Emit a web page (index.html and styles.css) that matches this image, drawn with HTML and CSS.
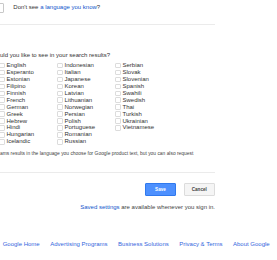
FILE: index.html
```html
<!DOCTYPE html>
<html>
<head>
<meta charset="utf-8">
<link rel="stylesheet" href="styles.css">
</head>
<body>
<div class="page">
  <div class="content">
    <div class="top">
      <span class="select"></span>
      <span class="hint">Don't see <a href="#">a language you know</a>?</span>
    </div>
    <div class="rule"></div>
    <div class="question">uld you like to see in your search results?</div>
    <div class="langs">
      <div class="col">
        <label><span class="cb"></span>English</label>
        <label><span class="cb"></span>Esperanto</label>
        <label><span class="cb"></span>Estonian</label>
        <label><span class="cb"></span>Filipino</label>
        <label><span class="cb"></span>Finnish</label>
        <label><span class="cb"></span>French</label>
        <label><span class="cb"></span>German</label>
        <label><span class="cb"></span>Greek</label>
        <label><span class="cb"></span>Hebrew</label>
        <label><span class="cb"></span>Hindi</label>
        <label><span class="cb"></span>Hungarian</label>
        <label><span class="cb"></span>Icelandic</label>
      </div>
      <div class="col">
        <label><span class="cb"></span>Indonesian</label>
        <label><span class="cb"></span>Italian</label>
        <label><span class="cb"></span>Japanese</label>
        <label><span class="cb"></span>Korean</label>
        <label><span class="cb"></span>Latvian</label>
        <label><span class="cb"></span>Lithuanian</label>
        <label><span class="cb"></span>Norwegian</label>
        <label><span class="cb"></span>Persian</label>
        <label><span class="cb"></span>Polish</label>
        <label><span class="cb"></span>Portuguese</label>
        <label><span class="cb"></span>Romanian</label>
        <label><span class="cb"></span>Russian</label>
      </div>
      <div class="col">
        <label><span class="cb"></span>Serbian</label>
        <label><span class="cb"></span>Slovak</label>
        <label><span class="cb"></span>Slovenian</label>
        <label><span class="cb"></span>Spanish</label>
        <label><span class="cb"></span>Swahili</label>
        <label><span class="cb"></span>Swedish</label>
        <label><span class="cb"></span>Thai</label>
        <label><span class="cb"></span>Turkish</label>
        <label><span class="cb"></span>Ukrainian</label>
        <label><span class="cb"></span>Vietnamese</label>
      </div>
    </div>
    <div class="notice">ams results in the language you choose for Google product text, but you can also request</div>
    <div class="rule rule2"></div>
    <div class="actions">
      <button class="btn save">Save</button>
      <button class="btn cancel">Cancel</button>
    </div>
    <div class="saved"><a href="#">Saved settings</a> are available whenever you sign in.</div>
  </div>
  <div class="footer">
    <a href="#">Google Home</a>
    <a href="#">Advertising Programs</a>
    <a href="#">Business Solutions</a>
    <a href="#">Privacy &amp; Terms</a>
    <a href="#">About Google</a>
  </div>
</div>
</body>
</html>
```

FILE: styles.css
```css
html, body {
  margin: 0;
  padding: 0;
  background: #fff;
}
body {
  width: 277px;
  height: 260px;
  overflow: hidden;
  font-family: "Liberation Sans", Arial, sans-serif;
  font-size: 6px;
  color: #222;
}
a {
  color: #1155cc;
  text-decoration: none;
}
.page {
  width: 277px;
}
.content {
  width: 215px;
}
.top {
  display: flex;
  align-items: center;
  height: 9px;
  padding-top: 3px;
}
.select {
  width: 9px;
  height: 8px;
  margin-left: -7px;
  border: 1px solid #c8c8c8;
  border-radius: 1px;
  box-sizing: content-box;
}
.hint {
  margin-left: 9.3px;
  line-height: 7px;
  color: #333;
}
.rule {
  height: 1px;
  background: #ebebeb;
  margin-top: 12px;
}
.question {
  margin-top: 26.5px;
  line-height: 7px;
  color: #333;
}
.langs {
  display: grid;
  grid-template-columns: 58px 58px 58px;
  margin-top: 3.7px;
  margin-left: -0.7px;
}
.col {
  display: flex;
  flex-direction: column;
}
.col label {
  display: flex;
  align-items: center;
  height: 6.93px;
  line-height: 6.93px;
  color: #333;
  white-space: nowrap;
}
.cb {
  width: 3.6px;
  height: 3.6px;
  border: 1px solid #dcdcdc;
  border-radius: 1px;
  margin-right: 1.6px;
  flex: none;
  background: #fff;
}
.notice {
  margin-top: 4.4px;
  line-height: 7px;
  font-size: 4.9px;
  color: #444;
  white-space: nowrap;
}
.rule2 {
  margin-top: 14.9px;
}
.actions {
  display: flex;
  justify-content: flex-end;
  gap: 7.3px;
  margin-top: 10.6px;
}
.btn {
  height: 12.4px;
  width: 31.5px;
  padding: 0;
  font-family: "Liberation Sans", Arial, sans-serif;
  font-size: 4.6px;
  font-weight: bold;
  border-radius: 1px;
  box-sizing: border-box;
}
.save {
  background: #4d90fe;
  border: 0.5px solid #3079ed;
  color: #fff;
}
.cancel {
  background: #f5f5f5;
  border: 0.5px solid #dcdcdc;
  color: #444;
}
.saved {
  margin-top: 8.5px;
  line-height: 7px;
  text-align: right;
  font-size: 6px;
  color: #444;
}
.footer {
  display: flex;
  gap: 10.5px;
  margin-top: 29.6px;
  padding-left: 2.7px;
  line-height: 7px;
  font-size: 6px;
  white-space: nowrap;
}
.footer a {
  color: #3366dd;
}
```
